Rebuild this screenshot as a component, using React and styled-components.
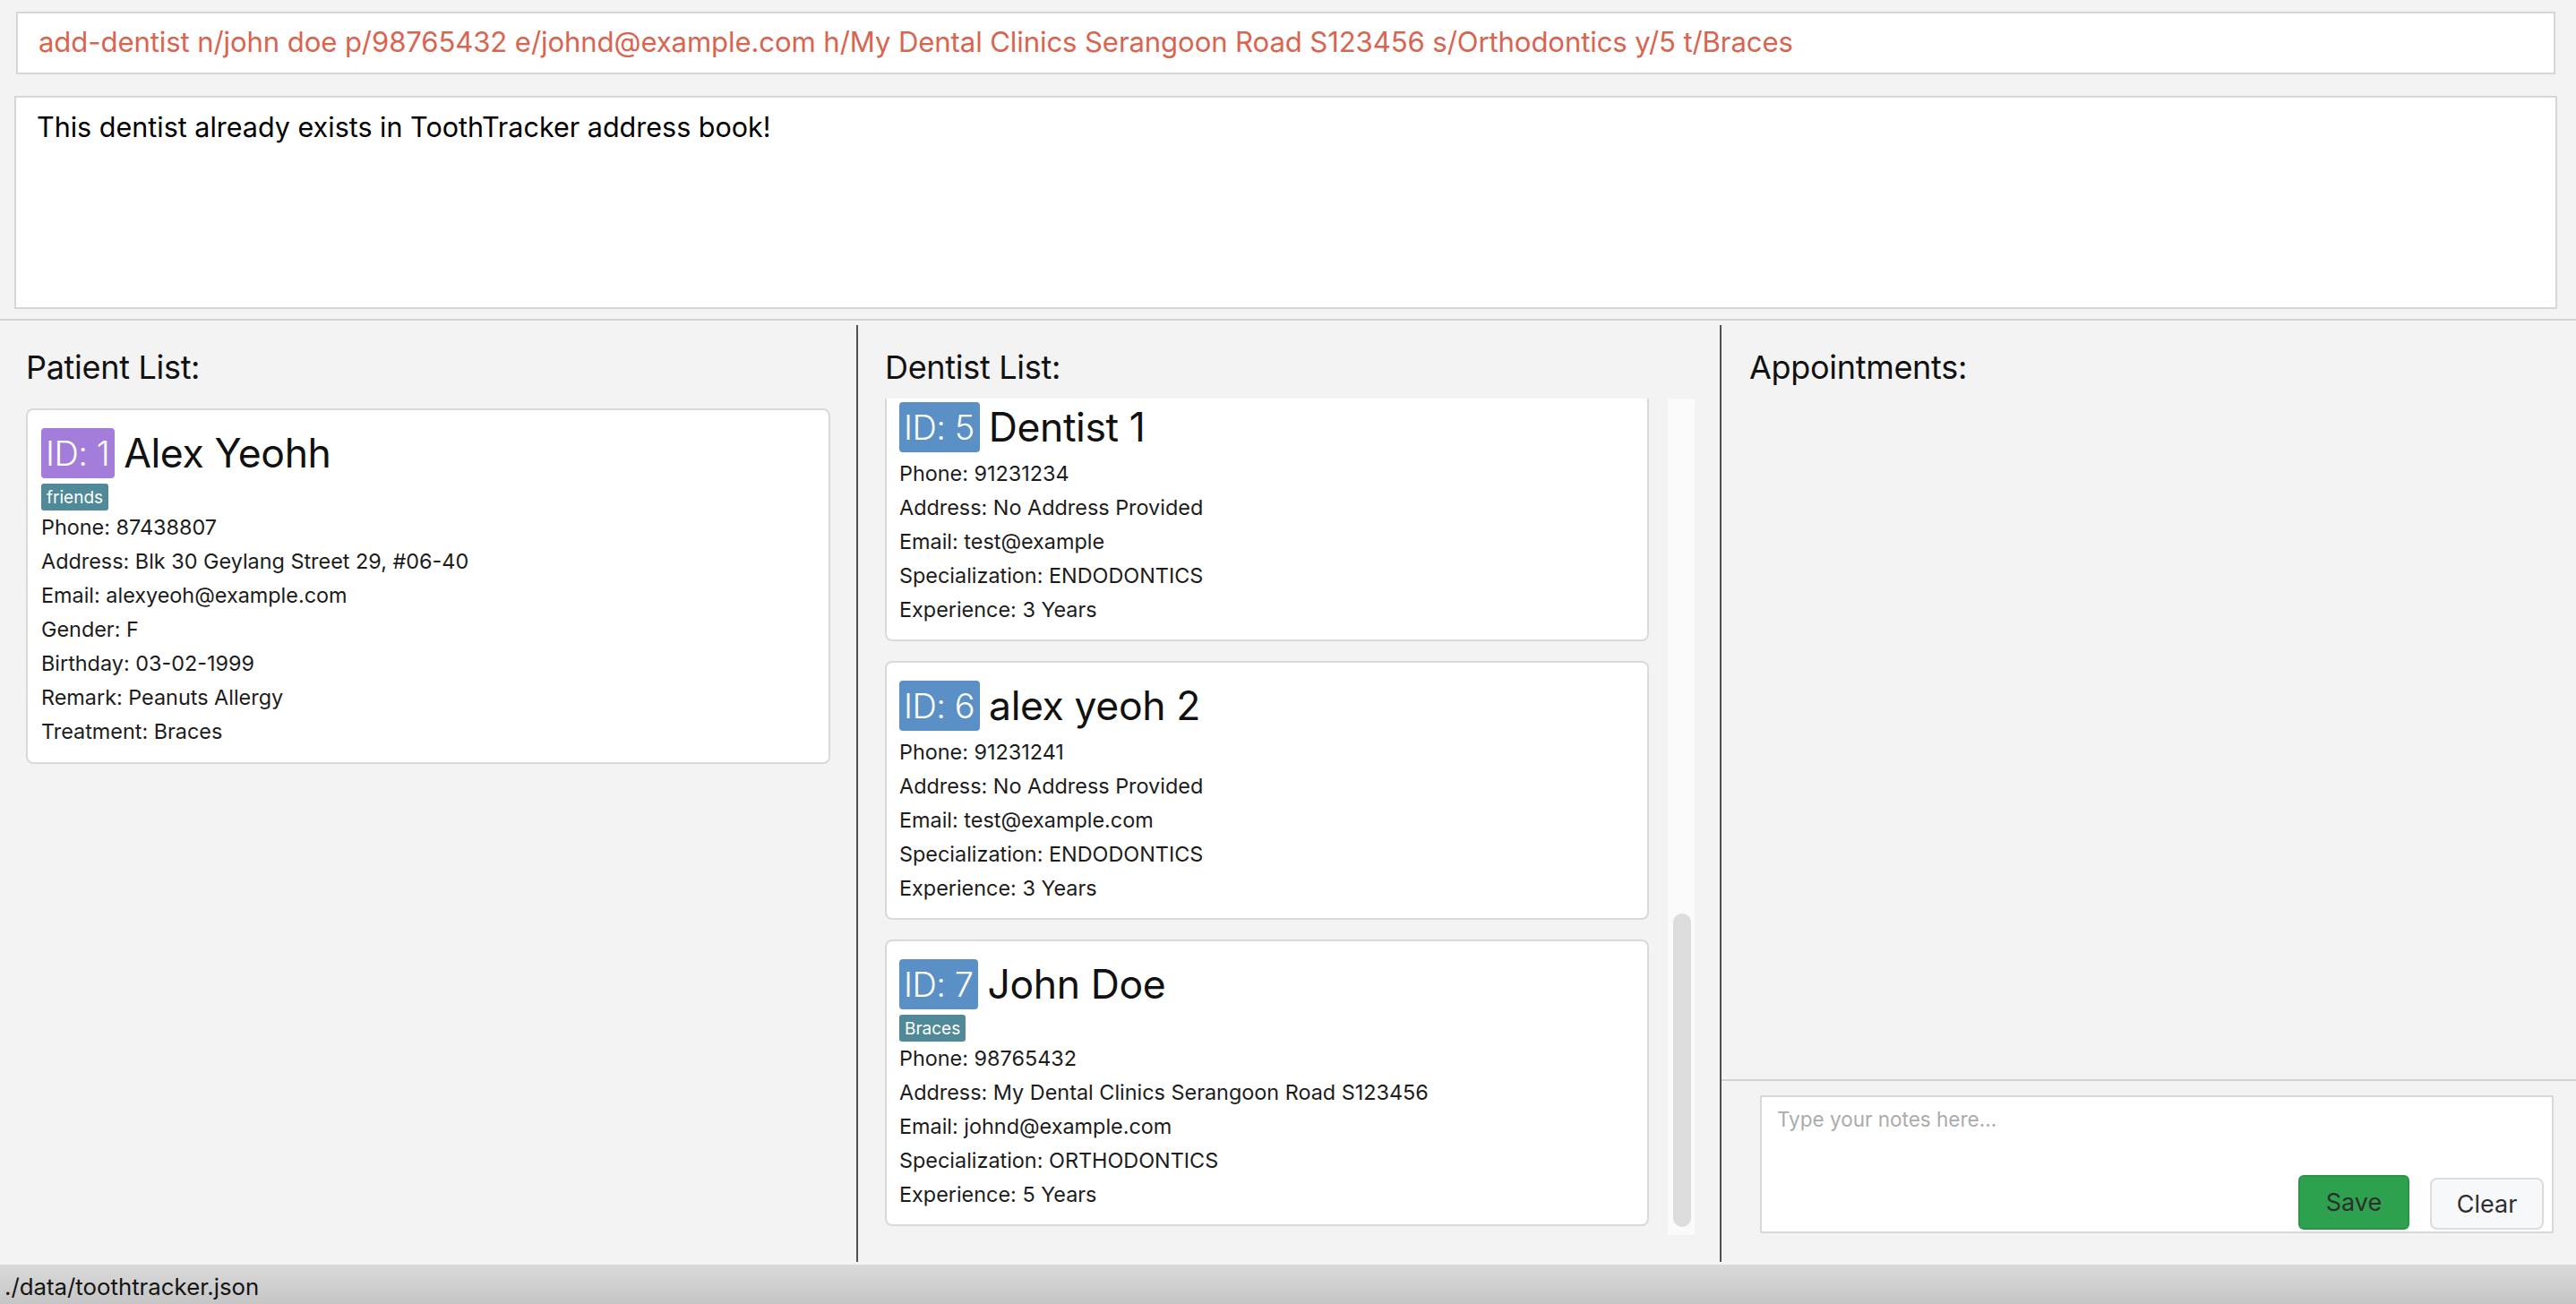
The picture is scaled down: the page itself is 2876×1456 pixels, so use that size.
import React from 'react'
import styled, { createGlobalStyle } from 'styled-components'

const GlobalStyle = createGlobalStyle`
  html, body {
    margin: 0;
    padding: 0;
    background: #f3f3f3;
  }
  * {
    box-sizing: border-box;
  }
`

const FONT = `Inter, "Noto Sans", "Liberation Sans", sans-serif`

const Window = styled.div`
  width: 2876px;
  height: 1456px;
  display: flex;
  flex-direction: column;
  background: #f3f3f3;
  font-family: ${FONT};
  color: #1c1c1c;
  overflow: hidden;
`

const CommandWrap = styled.div`
  padding: 13px 23px 0 18px;
`

const CommandBox = styled.div`
  height: 70px;
  background: #fff;
  border: 2px solid #d6d6d6;
  display: flex;
  align-items: center;
  padding: 0 0 2px 23px;
  font-size: 31.1px;
  letter-spacing: -0.1px;
  color: #d9644f;
  white-space: nowrap;
`

const ResultWrap = styled.div`
  padding: 24px 21px 0 16px;
`

const ResultBox = styled.div`
  height: 238px;
  background: #fff;
  border: 2px solid #d6d6d6;
  padding: 14px 0 0 23px;
  font-size: 30.5px;
  line-height: 37px;
  color: #000;
`

const Separator = styled.div`
  margin-top: 11px;
  height: 2px;
  background: #d3d3d3;
`

const Main = styled.div`
  flex: 1;
  display: flex;
  padding: 5px 0 3px;
  min-height: 0;
`

const Column = styled.div`
  width: ${p => p.$width}px;
  display: flex;
  flex-direction: column;
  padding-left: ${p => p.$padLeft || 0}px;
  padding-right: ${p => p.$padRight || 0}px;
  border-left: ${p => (p.$divider ? '2px solid #505050' : 'none')};
  min-height: 0;
`

const Title = styled.div`
  margin-top: 26px;
  padding-left: ${p => p.$indent || 0}px;
  font-size: 36px;
  line-height: 42px;
  color: #111;
  letter-spacing: -0.3px;
`

const PatientList = styled.div`
  margin-top: 25px;
`

const Card = styled.div`
  background: #fff;
  border: 2px solid #d9d9d9;
  border-radius: 8px;
  padding: ${p => p.$padTop}px 16px ${p => p.$padBottom}px ${p => p.$padLeft}px;
  & + & {
    margin-top: 22px;
  }
`

const CardHeader = styled.div`
  display: flex;
  align-items: center;
  height: 56px;
  margin-bottom: ${p => (p.$hasTag ? 6 : 5)}px;
`

const IdBadge = styled.span`
  height: 56px;
  display: inline-flex;
  align-items: center;
  padding: 0 6px 0 5px;
  border-radius: 4px;
  background: ${p => p.$color};
  color: #fff;
  font-size: 38px;
  font-weight: 300;
  letter-spacing: -0.5px;
`

const Name = styled.span`
  margin-left: 10px;
  font-size: 44.5px;
  color: #111;
  letter-spacing: -0.4px;
`

const Tag = styled.span`
  display: inline-flex;
  align-items: center;
  height: 30px;
  padding: 0 6px;
  border-radius: 3px;
  background: #508a99;
  color: #fff;
  font-size: 19px;
`

const Detail = styled.div`
  font-size: 23.4px;
  line-height: 38px;
  color: #1c1c1c;
  white-space: nowrap;
`

const ScrollArea = styled.div`
  margin-top: 14px;
  height: 934px;
  display: flex;
`

const Viewport = styled.div`
  flex: 1;
  overflow: hidden;
  padding-right: 21px;
`

const ScrollContent = styled.div`
  margin-top: -18px;
`

const Track = styled.div`
  width: 30px;
  background: #fafafa;
  padding: 575px 4px 0 6px;
`

const Thumb = styled.div`
  width: 20px;
  height: 350px;
  border-radius: 10px;
  background: #dcdcdc;
`

const Spacer = styled.div`
  flex: 1;
`

const NotesSection = styled.div`
  border-top: 2px solid #d2d2d2;
  padding: 16px 25px 32px 43px;
`

const NotesBox = styled.div`
  height: 154px;
  background: #fff;
  border: 2px solid #d8d8d8;
  display: flex;
  flex-direction: column;
`

const NotesInput = styled.textarea`
  flex: 1;
  border: none;
  outline: none;
  resize: none;
  background: transparent;
  padding: 11px 17px 0;
  font-family: ${FONT};
  font-size: 22.5px;
  color: #333;
  &::placeholder {
    color: #ababab;
  }
`

const ButtonRow = styled.div`
  display: flex;
  justify-content: flex-end;
  align-items: flex-end;
  gap: 23px;
  padding: 0 9px 2px 0;
`

const Button = styled.button`
  width: ${p => p.$w}px;
  height: ${p => p.$h}px;
  border-radius: ${p => (p.$primary ? 6 : 8)}px;
  border: ${p => (p.$primary ? '2px solid #2a9447' : '2px solid #dcdcdc')};
  background: ${p => (p.$primary ? '#2ea14e' : '#f7f8fa')};
  color: #2e2e2e;
  font-family: ${FONT};
  font-size: 27px;
  padding: 0;
`

const StatusBar = styled.div`
  height: 44px;
  background: linear-gradient(#dadada, #c5c5c5);
  padding: 5px 0 0 5px;
  font-size: 25.8px;
  line-height: 40px;
  color: #151515;
  overflow: hidden;
  white-space: nowrap;
`

const PersonCard = ({ id, name, color, tag, lines, padTop = 20, padBottom = 14, padLeft = 14 }) => (
  <Card $padTop={padTop} $padBottom={padBottom} $padLeft={padLeft}>
    <CardHeader $hasTag={!!tag}>
      <IdBadge $color={color}>ID: {id}</IdBadge>
      <Name>{name}</Name>
    </CardHeader>
    {tag && <Tag>{tag}</Tag>}
    {lines.map(line => <Detail key={line}>{line}</Detail>)}
  </Card>
)

const patients = [
  {
    id: 1,
    name: 'Alex Yeohh',
    tag: 'friends',
    lines: [
      'Phone: 87438807',
      'Address: Blk 30 Geylang Street 29, #06-40',
      'Email: alexyeoh@example.com',
      'Gender: F',
      'Birthday: 03-02-1999',
      'Remark: Peanuts Allergy',
      'Treatment: Braces',
    ],
  },
]

const dentists = [
  {
    id: 5,
    name: 'Dentist 1',
    lines: [
      'Phone: 91231234',
      'Address: No Address Provided',
      'Email: test@example',
      'Specialization: ENDODONTICS',
      'Experience: 3 Years',
    ],
  },
  {
    id: 6,
    name: 'alex yeoh 2',
    lines: [
      'Phone: 91231241',
      'Address: No Address Provided',
      'Email: test@example.com',
      'Specialization: ENDODONTICS',
      'Experience: 3 Years',
    ],
  },
  {
    id: 7,
    name: 'John Doe',
    tag: 'Braces',
    lines: [
      'Phone: 98765432',
      'Address: My Dental Clinics Serangoon Road S123456',
      'Email: johnd@example.com',
      'Specialization: ORTHODONTICS',
      'Experience: 5 Years',
    ],
  },
]

export default function App() {
  return (
    <Window>
      <GlobalStyle />
      <CommandWrap>
        <CommandBox>
          add-dentist n/john doe p/98765432 e/johnd@example.com h/My Dental Clinics Serangoon Road S123456 s/Orthodontics y/5 t/Braces
        </CommandBox>
      </CommandWrap>
      <ResultWrap>
        <ResultBox>This dentist already exists in ToothTracker address book!</ResultBox>
      </ResultWrap>
      <Separator />
      <Main>
        <Column $width={956} $padLeft={29} $padRight={29}>
          <Title>Patient List:</Title>
          <PatientList>
            {patients.map(p => (
              <PersonCard key={p.id} {...p} color="#a47ddb" padTop={20} padBottom={15} padLeft={15} />
            ))}
          </PatientList>
        </Column>
        <Column $width={964} $divider $padLeft={30} $padRight={28}>
          <Title>Dentist List:</Title>
          <ScrollArea>
            <Viewport>
              <ScrollContent>
                {dentists.map(d => (
                  <PersonCard key={d.id} {...d} color="#5a90c6" />
                ))}
              </ScrollContent>
            </Viewport>
            <Track>
              <Thumb />
            </Track>
          </ScrollArea>
        </Column>
        <Column $width={956} $divider>
          <Title $indent={31}>Appointments:</Title>
          <Spacer />
          <NotesSection>
            <NotesBox>
              <NotesInput placeholder="Type your notes here..." />
              <ButtonRow>
                <Button $primary $w={124} $h={61}>Save</Button>
                <Button $w={127} $h={58}>Clear</Button>
              </ButtonRow>
            </NotesBox>
          </NotesSection>
        </Column>
      </Main>
      <StatusBar>./data/toothtracker.json</StatusBar>
    </Window>
  )
}
